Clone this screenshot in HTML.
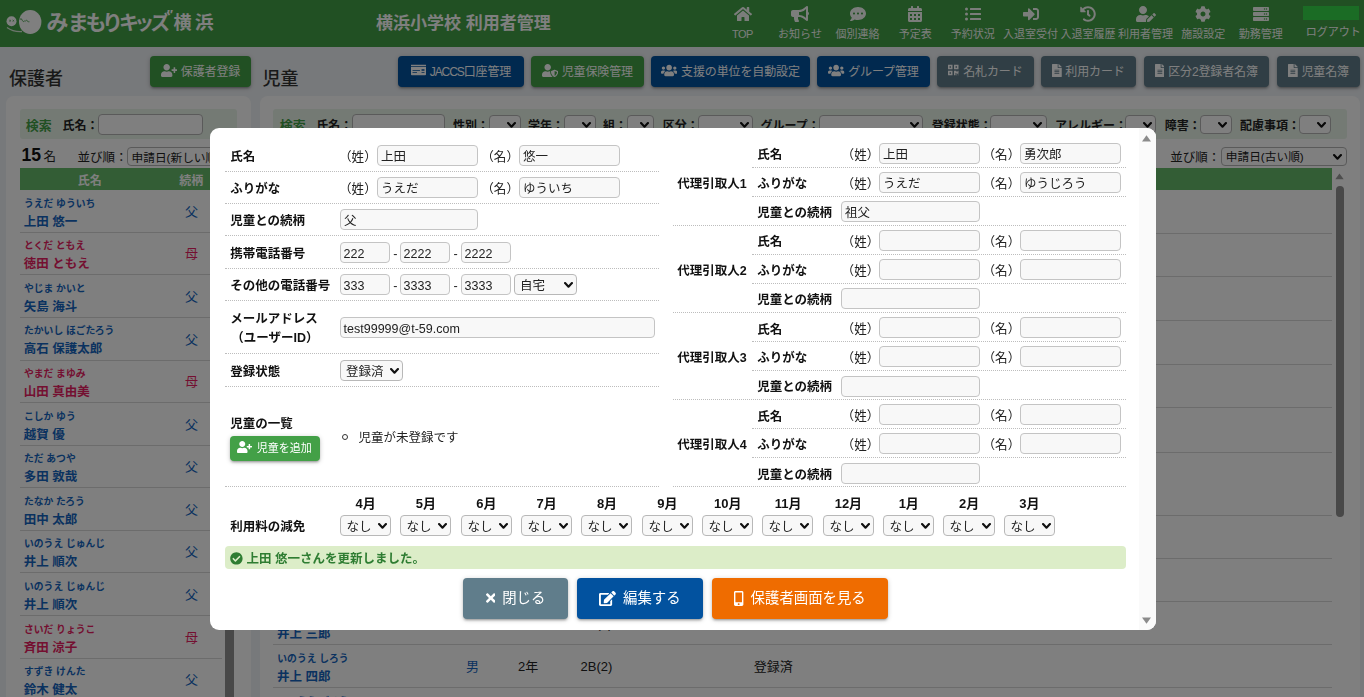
<!DOCTYPE html>
<html lang="ja"><head><meta charset="utf-8"><title>横浜小学校 利用者管理</title><style>
*{margin:0;padding:0;box-sizing:border-box;}
html,body{width:1364px;height:697px;overflow:hidden;background:#eff2f6;}
body{font-family:"Liberation Sans","Noto Sans CJK JP",sans-serif;position:relative;}
#pg{position:absolute;left:0;top:0;width:1364px;height:697px;overflow:hidden;background:#eff2f6;}
.a{position:absolute;}
.t{position:absolute;white-space:nowrap;}
.ic{display:inline-block;flex:none;}
.nv{text-align:center;line-height:0;color:#fff;opacity:.96;}
.btn{padding-bottom:2px;display:flex;align-items:center;justify-content:center;color:#fff;border-radius:4px;white-space:nowrap;box-shadow:0 2px 2px 0 rgba(0,0,0,.14),0 3px 1px -2px rgba(0,0,0,.12),0 1px 5px 0 rgba(0,0,0,.2);}
.btn.big{padding-bottom:0;font-size:14.4px;letter-spacing:0;}
.inp,.inp2,.sel,.sel2{border:1px solid #c4c4c4;border-radius:4px;background:#f8f8f8;font-size:12.500px;color:#222;overflow:hidden;}
.inp2,.sel2{border-color:#b4b4b4;background:#fff;font-size:11.700px;}
.sel{border-color:#b8b8b8;}
.st{position:absolute;top:1.800px;white-space:nowrap;}
.sel .st{top:2.200px;}
.sel2 .st{top:1px;}
.btn.big span{position:relative;top:-1.500px;}
.cv{position:absolute;right:3.500px;top:50%;margin-top:-2.900px;line-height:0;}
.dot{height:0;border-top:1px dotted #bdbdbd;}
</style></head><body><div id="pg">
<header>
<div class="a" style="left:0;top:0;width:1364px;height:47px;background:#43a047;"></div>
<svg class="a" style="left:0;top:0" width="46" height="47" viewBox="0 0 46 47"><circle cx="11.500" cy="21.300" r="5" fill="#fff"/><path d="M7 27.500 Q13 32 22 31.500" stroke="#fff" stroke-width="1.300" fill="none" opacity=".8"/><path d="M9.300 20 l1.600 1.400 m0 -1.400 l-1.600 1.400 M12.600 20 l1.600 1.400 m0 -1.400 l-1.600 1.400" stroke="#43a047" stroke-width="0.700" fill="none"/><ellipse cx="30.200" cy="22" rx="11.200" ry="11.900" fill="#fff"/><path d="M19.800 19.300 q1.800 -1.600 2.600 1.200 q0.800 2.200 2.400 0.300 M25.200 21.200 q1.500 -1.800 2.600 0 q0.600 1.200 1.600 0.600" stroke="#43a047" stroke-width="0.900" fill="none"/></svg>
<span class="t" style="left:-92.5px;width:300px;text-align:center;top:7.60px;font-size:22px;font-weight:700;color:#fff;line-height:30px;">み</span>
<span class="t" style="left:-71.7px;width:300px;text-align:center;top:7.60px;font-size:21px;font-weight:700;color:#fff;line-height:30px;">ま</span>
<span class="t" style="left:-54.099999999999994px;width:300px;text-align:center;top:7.60px;font-size:21px;font-weight:700;color:#fff;line-height:30px;">も</span>
<span class="t" style="left:-37.400000000000006px;width:300px;text-align:center;top:7.60px;font-size:21px;font-weight:700;color:#fff;line-height:30px;">り</span>
<span class="t" style="left:-21.099999999999994px;width:300px;text-align:center;top:7.60px;font-size:20px;font-weight:700;color:#fff;line-height:30px;">キ</span>
<span class="t" style="left:-5.699999999999989px;width:300px;text-align:center;top:7.60px;font-size:20px;font-weight:700;color:#fff;line-height:30px;">ッ</span>
<span class="t" style="left:10.599999999999994px;width:300px;text-align:center;top:7.60px;font-size:20px;font-weight:700;color:#fff;line-height:30px;">ズ</span>
<span class="t" style="left:32.599999999999994px;width:300px;text-align:center;top:7.60px;font-size:18px;font-weight:700;color:#fff;line-height:30px;">横</span>
<span class="t" style="left:54.19999999999999px;width:300px;text-align:center;top:7.60px;font-size:18.5px;font-weight:700;color:#fff;line-height:30px;">浜</span>
<span class="t" style="left:19.80000000000001px;width:300px;text-align:center;top:5.00px;font-size:13px;font-weight:700;color:#fff;line-height:20px;">″</span>
<h1 class="t" style="left:376px;top:11.50px;font-size:17px;font-weight:700;color:#fff;line-height:24px;">横浜小学校 利用者管理</h1>
<nav>
<div class="a nv" style="left:702.5px;top:5.500px;width:80px;"><svg class="ic" viewBox="0 0 576 512" width="18.00" height="16" style="fill:currentColor;"><path d="M280.370 148.260L96 300.110V464a16 16 0 0 0 16 16l112.060-.290a16 16 0 0 0 15.920-16V368a16 16 0 0 1 16-16h64a16 16 0 0 1 16 16v95.640a16 16 0 0 0 16 16.050L464 480a16 16 0 0 0 16-16V300L295.670 148.260a12.190 12.190 0 0 0-15.300 0zM571.600 251.470L488 182.560V44.050a12 12 0 0 0-12-12h-56a12 12 0 0 0-12 12v72.610L318.470 43a48 48 0 0 0-61 0L4.340 251.470a12 12 0 0 0-1.600 16.900l25.500 31A12 12 0 0 0 45.150 301l235.220-193.740a12.190 12.190 0 0 1 15.300 0L530.900 301a12 12 0 0 0 16.900-1.600l25.500-31a12 12 0 0 0-1.700-16.930z"/></svg></div>
<span class="t" style="left:592.4px;width:300px;text-align:center;top:25.70px;font-size:11px;font-weight:400;color:#fff;line-height:16px;letter-spacing:-0.6px;opacity:.96;">TOP</span>
<div class="a nv" style="left:760.1px;top:5.500px;width:80px;"><svg class="ic" viewBox="0 0 576 512" width="18.00" height="16" style="fill:currentColor;"><path d="M576 240c0-23.630-12.950-44.040-32-55.120V32.010C544 23.260 537.020 0 512 0c-7.120 0-14.190 2.380-19.980 7.020l-85.030 68.030C364.280 109.190 310.660 128 256 128H64c-35.350 0-64 28.650-64 64v96c0 35.350 28.650 64 64 64h33.700c-1.390 10.480-2.180 21.140-2.180 32 0 39.770 9.260 77.350 25.560 110.940 5.190 10.690 16.520 17.060 28.400 17.060h74.280c26.050 0 41.690-29.840 25.900-50.560-16.400-21.520-26.150-48.360-26.150-77.440 0-11.110 1.620-21.790 4.410-32H256c54.660 0 108.280 18.810 150.980 52.950l85.030 68.030a32.023 32.023 0 0 0 19.980 7.020c24.920 0 32-22.780 32-32V295.130C563.050 284.040 576 263.630 576 240zm-96 141.420l-33.050-26.440C392.950 311.780 325.120 288 256 288v-96c69.120 0 136.950-23.780 190.950-66.980L480 98.580v282.840z"/></svg></div>
<span class="t" style="left:650.0px;width:300px;text-align:center;top:25.70px;font-size:11px;font-weight:400;color:#fff;line-height:16px;letter-spacing:0;opacity:.96;">お知らせ</span>
<div class="a nv" style="left:817.7px;top:5.500px;width:80px;"><svg class="ic" viewBox="0 0 512 512" width="16.00" height="16" style="fill:currentColor;"><path d="M256 32C114.600 32 0 125.100 0 240c0 49.600 21.400 95 57 130.700C44.500 421.100 2.700 466 2.200 466.500c-2.200 2.300-2.800 5.700-1.500 8.700S4.800 480 8 480c66.300 0 116-31.800 140.600-51.400 32.700 12.300 69 19.400 107.400 19.400 141.400 0 256-93.100 256-208S397.400 32 256 32zM128 272c-17.700 0-32-14.300-32-32s14.300-32 32-32 32 14.300 32 32-14.300 32-32 32zm128 0c-17.700 0-32-14.300-32-32s14.300-32 32-32 32 14.300 32 32-14.300 32-32 32zm128 0c-17.700 0-32-14.300-32-32s14.300-32 32-32 32 14.300 32 32-14.300 32-32 32z"/></svg></div>
<span class="t" style="left:707.6px;width:300px;text-align:center;top:25.70px;font-size:11px;font-weight:400;color:#fff;line-height:16px;letter-spacing:0;opacity:.96;">個別連絡</span>
<div class="a nv" style="left:875.3px;top:5.500px;width:80px;"><svg class="ic" viewBox="0 0 448 512" width="14.00" height="16" style="fill:currentColor;"><path d="M0 464c0 26.500 21.500 48 48 48h352c26.500 0 48-21.500 48-48V192H0v272zm320-196c0-6.600 5.400-12 12-12h40c6.600 0 12 5.400 12 12v40c0 6.600-5.400 12-12 12h-40c-6.600 0-12-5.400-12-12v-40zm0 128c0-6.600 5.400-12 12-12h40c6.600 0 12 5.400 12 12v40c0 6.600-5.400 12-12 12h-40c-6.600 0-12-5.400-12-12v-40zM192 268c0-6.600 5.400-12 12-12h40c6.600 0 12 5.400 12 12v40c0 6.600-5.400 12-12 12h-40c-6.600 0-12-5.400-12-12v-40zm0 128c0-6.600 5.400-12 12-12h40c6.600 0 12 5.400 12 12v40c0 6.600-5.400 12-12 12h-40c-6.600 0-12-5.400-12-12v-40zM64 268c0-6.600 5.400-12 12-12h40c6.600 0 12 5.400 12 12v40c0 6.600-5.400 12-12 12H76c-6.600 0-12-5.400-12-12v-40zm0 128c0-6.600 5.400-12 12-12h40c6.600 0 12 5.400 12 12v40c0 6.600-5.400 12-12 12H76c-6.600 0-12-5.400-12-12v-40zM400 64h-48V16c0-8.800-7.200-16-16-16h-32c-8.800 0-16 7.200-16 16v48H160V16c0-8.800-7.200-16-16-16h-32c-8.800 0-16 7.200-16 16v48H48C21.500 64 0 85.500 0 112v48h448v-48c0-26.500-21.500-48-48-48z"/></svg></div>
<span class="t" style="left:765.1999999999999px;width:300px;text-align:center;top:25.70px;font-size:11px;font-weight:400;color:#fff;line-height:16px;letter-spacing:0;opacity:.96;">予定表</span>
<div class="a nv" style="left:932.9px;top:5.500px;width:80px;"><svg class="ic" viewBox="0 0 512 512" width="16.00" height="16" style="fill:currentColor;"><path d="M48 48a48 48 0 1 0 48 48 48 48 0 0 0-48-48zm0 160a48 48 0 1 0 48 48 48 48 0 0 0-48-48zm0 160a48 48 0 1 0 48 48 48 48 0 0 0-48-48zm448 16H176a16 16 0 0 0-16 16v32a16 16 0 0 0 16 16h320a16 16 0 0 0 16-16v-32a16 16 0 0 0-16-16zm0-320H176a16 16 0 0 0-16 16v32a16 16 0 0 0 16 16h320a16 16 0 0 0 16-16V80a16 16 0 0 0-16-16zm0 160H176a16 16 0 0 0-16 16v32a16 16 0 0 0 16 16h320a16 16 0 0 0 16-16v-32a16 16 0 0 0-16-16z"/></svg></div>
<span class="t" style="left:822.8px;width:300px;text-align:center;top:25.70px;font-size:11px;font-weight:400;color:#fff;line-height:16px;letter-spacing:0;opacity:.96;">予約状況</span>
<div class="a nv" style="left:990.5px;top:5.500px;width:80px;"><svg class="ic" viewBox="0 0 512 512" width="16.00" height="16" style="fill:currentColor;"><path d="M416 448h-84c-6.600 0-12-5.400-12-12v-40c0-6.600 5.400-12 12-12h84c17.700 0 32-14.300 32-32V160c0-17.700-14.300-32-32-32h-84c-6.600 0-12-5.400-12-12V76c0-6.600 5.400-12 12-12h84c53 0 96 43 96 96v192c0 53-43 96-96 96zm-47-201L201 79c-15-15-41-4.500-41 17v96H24c-13.300 0-24 10.700-24 24v96c0 13.300 10.700 24 24 24h136v96c0 21.500 26 32 41 17l168-168c9.300-9.400 9.300-24.600 0-34z"/></svg></div>
<span class="t" style="left:880.4000000000001px;width:300px;text-align:center;top:25.70px;font-size:11px;font-weight:400;color:#fff;line-height:16px;letter-spacing:0;opacity:.96;">入退室受付</span>
<div class="a nv" style="left:1048.1px;top:5.500px;width:80px;"><svg class="ic" viewBox="0 0 512 512" width="16.00" height="16" style="fill:currentColor;"><path d="M504 255.531c.253 136.640-111.180 248.372-247.820 248.468-59.015.042-113.223-20.530-155.822-54.911-11.077-8.940-11.905-25.541-1.839-35.607l11.267-11.267c8.609-8.609 22.353-9.551 31.891-1.984C173.062 425.135 212.781 440 256 440c101.705 0 184-82.311 184-184 0-101.705-82.311-184-184-184-48.814 0-93.149 18.969-126.068 49.932l50.754 50.754c10.080 10.080 2.941 27.314-11.313 27.314H24c-8.837 0-16-7.163-16-16V38.627c0-14.254 17.234-21.393 27.314-11.314l49.372 49.372C129.209 34.136 189.552 8 256 8c136.810 0 247.747 110.780 248 247.531zm-180.912 78.784l9.823-12.630c8.138-10.463 6.253-25.542-4.210-33.679L288 256.349V152c0-13.255-10.745-24-24-24h-16c-13.255 0-24 10.745-24 24v135.651l65.409 50.874c10.463 8.137 25.541 6.253 33.679-4.210z"/></svg></div>
<span class="t" style="left:938.0px;width:300px;text-align:center;top:25.70px;font-size:11px;font-weight:400;color:#fff;line-height:16px;letter-spacing:0;opacity:.96;">入退室履歴</span>
<div class="a nv" style="left:1105.7px;top:5.500px;width:80px;"><svg class="ic" viewBox="0 0 640 512" width="20.00" height="16" style="fill:currentColor;"><path d="M224 256c70.700 0 128-57.300 128-128S294.700 0 224 0 96 57.300 96 128s57.300 128 128 128zm89.600 32h-16.700c-22.200 10.200-46.900 16-72.900 16s-50.600-5.800-72.900-16h-16.700C60.200 288 0 348.200 0 422.400V464c0 26.500 21.500 48 48 48h274.900c-2.400-6.800-3.400-14-2.600-21.300l6.800-60.900 1.200-11.100 7.900-7.900 77.300-77.300c-24.500-27.700-60-45.500-99.900-45.500zm45.300 145.300l-6.800 61c-1.100 10.200 7.500 18.800 17.600 17.600l60.900-6.800 137.900-137.900-71.700-71.700-137.900 137.800zM633 268.900L595.100 231c-9.300-9.300-24.500-9.300-33.800 0l-37.800 37.800-4.100 4.100 71.800 71.700 41.800-41.800c9.300-9.400 9.300-24.500 0-33.900z"/></svg></div>
<span class="t" style="left:995.6000000000001px;width:300px;text-align:center;top:25.70px;font-size:11px;font-weight:400;color:#fff;line-height:16px;letter-spacing:0;opacity:.96;">利用者管理</span>
<div class="a nv" style="left:1163.3px;top:5.500px;width:80px;"><svg class="ic" viewBox="0 0 512 512" width="16.00" height="16" style="fill:currentColor;"><path d="M487.400 315.700l-42.600-24.600c4.300-23.200 4.300-47 0-70.200l42.600-24.600c4.900-2.800 7.100-8.600 5.500-14-11.100-35.600-30-67.800-54.700-94.600-3.800-4.100-10-5.100-14.800-2.300L380.800 110c-17.900-15.400-38.500-27.300-60.800-35.100V25.800c0-5.600-3.900-10.500-9.400-11.700-36.700-8.200-74.300-7.800-109.200 0-5.500 1.200-9.400 6.100-9.400 11.700V75c-22.200 7.900-42.800 19.800-60.800 35.100L88.700 85.500c-4.900-2.800-11-1.900-14.800 2.300-24.700 26.700-43.600 58.900-54.700 94.600-1.700 5.400.6 11.200 5.500 14L67.300 221c-4.300 23.200-4.300 47 0 70.200l-42.600 24.600c-4.900 2.800-7.100 8.600-5.500 14 11.100 35.600 30 67.800 54.700 94.600 3.800 4.100 10 5.100 14.800 2.300l42.600-24.600c17.900 15.400 38.500 27.300 60.800 35.100v49.200c0 5.600 3.900 10.500 9.400 11.700 36.700 8.200 74.300 7.800 109.200 0 5.500-1.200 9.400-6.100 9.400-11.700v-49.200c22.200-7.900 42.800-19.800 60.800-35.100l42.600 24.600c4.900 2.800 11 1.900 14.800-2.300 24.700-26.700 43.600-58.900 54.700-94.600 1.500-5.500-.7-11.300-5.600-14.100zM256 336c-44.100 0-80-35.900-80-80s35.900-80 80-80 80 35.900 80 80-35.900 80-80 80z"/></svg></div>
<span class="t" style="left:1053.2px;width:300px;text-align:center;top:25.70px;font-size:11px;font-weight:400;color:#fff;line-height:16px;letter-spacing:0;opacity:.96;">施設設定</span>
<div class="a nv" style="left:1220.9px;top:5.500px;width:80px;"><svg class="ic" viewBox="0 0 512 512" width="16.00" height="16" style="fill:currentColor;"><path d="M480 160H32c-17.673 0-32-14.327-32-32V64c0-17.673 14.327-32 32-32h448c17.673 0 32 14.327 32 32v64c0 17.673-14.327 32-32 32zm-48-88c-13.255 0-24 10.745-24 24s10.745 24 24 24 24-10.745 24-24-10.745-24-24-24zm-64 0c-13.255 0-24 10.745-24 24s10.745 24 24 24 24-10.745 24-24-10.745-24-24-24zm112 248H32c-17.673 0-32-14.327-32-32v-64c0-17.673 14.327-32 32-32h448c17.673 0 32 14.327 32 32v64c0 17.673-14.327 32-32 32zm-48-88c-13.255 0-24 10.745-24 24s10.745 24 24 24 24-10.745 24-24-10.745-24-24-24zm-64 0c-13.255 0-24 10.745-24 24s10.745 24 24 24 24-10.745 24-24-10.745-24-24-24zm112 248H32c-17.673 0-32-14.327-32-32v-64c0-17.673 14.327-32 32-32h448c17.673 0 32 14.327 32 32v64c0 17.673-14.327 32-32 32zm-48-88c-13.255 0-24 10.745-24 24s10.745 24 24 24 24-10.745 24-24-10.745-24-24-24zm-64 0c-13.255 0-24 10.745-24 24s10.745 24 24 24 24-10.745 24-24-10.745-24-24-24z"/></svg></div>
<span class="t" style="left:1110.8000000000002px;width:300px;text-align:center;top:25.70px;font-size:11px;font-weight:400;color:#fff;line-height:16px;letter-spacing:0;opacity:.96;">勤務管理</span>
<span class="t" style="left:1183.2px;width:300px;text-align:center;top:23.60px;font-size:11px;font-weight:400;color:#fff;line-height:16px;">ログアウト</span>
</nav></header>
<main><section>
<h2 class="t" style="left:8.9px;top:67.40px;font-size:18px;font-weight:500;color:#333;line-height:24px;">保護者</h2>
<div class="a btn" style="left:150px;top:56px;width:101px;height:31px;background:#43a047;font-size:12px;letter-spacing:-0.12px;padding-bottom:3px;padding-right:0px;"><svg class="ic" viewBox="0 0 640 512" width="16.25" height="13" style="fill:currentColor;margin-right:3.7px;"><path d="M624 208h-64v-64c0-8.800-7.200-16-16-16h-32c-8.800 0-16 7.200-16 16v64h-64c-8.800 0-16 7.200-16 16v32c0 8.800 7.200 16 16 16h64v64c0 8.800 7.200 16 16 16h32c8.800 0 16-7.200 16-16v-64h64c8.800 0 16-7.200 16-16v-32c0-8.800-7.200-16-16-16zm-400 48c70.700 0 128-57.300 128-128S294.700 0 224 0 96 57.300 96 128s57.300 128 128 128zm89.600 32h-16.700c-22.200 10.200-46.900 16-72.900 16s-50.600-5.800-72.900-16h-16.700C60.200 288 0 348.200 0 422.400V464c0 26.500 21.500 48 48 48h352c26.500 0 48-21.500 48-48v-41.600c0-74.200-60.200-134.400-134.400-134.400z"/></svg><span>保護者登録</span></div>
<div class="a" style="left:6px;top:96px;width:245px;height:620px;background:#fff;border-radius:8px;"></div>
<div class="a" style="left:20px;top:109px;width:216.5px;height:30px;background:#e8f5e9;border-radius:3px;"></div>
<span class="t" style="left:25.8px;top:115.80px;font-size:13px;font-weight:700;color:#43a047;line-height:20px;">検索</span>
<span class="t" style="left:62.6px;top:116.20px;font-size:12px;font-weight:700;color:#222;line-height:20px;">氏名：</span>
<div class="a inp2" style="left:98px;top:114px;width:105px;height:21px;"><span class="st" style="left:2.9px;line-height:19px;"></span></div>
<span class="t" style="left:21.5px;top:144.20px;font-size:17.6px;font-weight:700;color:#111;line-height:22px;">15</span>
<span class="t" style="left:43.5px;top:146.60px;font-size:12.5px;font-weight:400;color:#222;line-height:20px;">名</span>
<span class="t" style="left:77.5px;top:148.20px;font-size:12.5px;font-weight:400;color:#222;line-height:20px;">並び順：</span>
<div class="a sel2" style="left:127px;top:147px;width:110px;height:19.2px;"><span class="st" style="left:3.5px;line-height:17.2px;">申請日(新しい順)</span><span class="cv"><svg class="chev" viewBox="0 0 10 7" width="9" height="6.3"><path d="M1.2 1.2 L5 5.2 L8.800 1.200" fill="none" stroke="#111" stroke-width="2.4" stroke-linecap="round" stroke-linejoin="round"/></svg></span></div>
<div class="a" style="left:20px;top:168px;width:216.5px;height:21.7px;background:#66bb6a;"></div>
<span class="t" style="left:-60.2px;width:300px;text-align:center;top:171.50px;font-size:12px;font-weight:700;color:#fff;line-height:18px;">氏名</span>
<span class="t" style="left:41.30000000000001px;width:300px;text-align:center;top:171.50px;font-size:12px;font-weight:700;color:#fff;line-height:18px;">続柄</span>
<span class="t" style="left:24.0px;top:196.70px;font-size:9.8px;font-weight:700;color:#1565c0;line-height:14px;">うえだ ゆういち</span>
<span class="t" style="left:23.8px;top:212.70px;font-size:12.5px;font-weight:700;color:#1565c0;line-height:18px;">上田 悠一</span>
<span class="t" style="left:41.5px;width:300px;text-align:center;top:202.80px;font-size:13px;font-weight:400;color:#1565c0;line-height:18px;">父</span>
<div class="a" style="left:20px;top:232px;width:201.7px;height:1px;background:#d8d8d8;"></div>
<span class="t" style="left:24.0px;top:239.28px;font-size:9.8px;font-weight:700;color:#e91e63;line-height:14px;">とくだ ともえ</span>
<span class="t" style="left:23.8px;top:255.28px;font-size:12.5px;font-weight:700;color:#e91e63;line-height:18px;">徳田 ともえ</span>
<span class="t" style="left:41.5px;width:300px;text-align:center;top:245.38px;font-size:13px;font-weight:400;color:#e91e63;line-height:18px;">母</span>
<div class="a" style="left:20px;top:274px;width:201.7px;height:1px;background:#d8d8d8;"></div>
<span class="t" style="left:24.0px;top:281.86px;font-size:9.8px;font-weight:700;color:#1565c0;line-height:14px;">やじま かいと</span>
<span class="t" style="left:23.8px;top:297.86px;font-size:12.5px;font-weight:700;color:#1565c0;line-height:18px;">矢島 海斗</span>
<span class="t" style="left:41.5px;width:300px;text-align:center;top:287.96px;font-size:13px;font-weight:400;color:#1565c0;line-height:18px;">父</span>
<div class="a" style="left:20px;top:317px;width:201.7px;height:1px;background:#d8d8d8;"></div>
<span class="t" style="left:24.0px;top:324.44px;font-size:9.8px;font-weight:700;color:#1565c0;line-height:14px;">たかいし ほごたろう</span>
<span class="t" style="left:23.8px;top:340.44px;font-size:12.5px;font-weight:700;color:#1565c0;line-height:18px;">高石 保護太郎</span>
<span class="t" style="left:41.5px;width:300px;text-align:center;top:330.54px;font-size:13px;font-weight:400;color:#1565c0;line-height:18px;">父</span>
<div class="a" style="left:20px;top:360px;width:201.7px;height:1px;background:#d8d8d8;"></div>
<span class="t" style="left:24.0px;top:367.02px;font-size:9.8px;font-weight:700;color:#e91e63;line-height:14px;">やまだ まゆみ</span>
<span class="t" style="left:23.8px;top:383.02px;font-size:12.5px;font-weight:700;color:#e91e63;line-height:18px;">山田 真由美</span>
<span class="t" style="left:41.5px;width:300px;text-align:center;top:373.12px;font-size:13px;font-weight:400;color:#e91e63;line-height:18px;">母</span>
<div class="a" style="left:20px;top:402px;width:201.7px;height:1px;background:#d8d8d8;"></div>
<span class="t" style="left:24.0px;top:409.60px;font-size:9.8px;font-weight:700;color:#1565c0;line-height:14px;">こしか ゆう</span>
<span class="t" style="left:23.8px;top:425.60px;font-size:12.5px;font-weight:700;color:#1565c0;line-height:18px;">越賀 優</span>
<span class="t" style="left:41.5px;width:300px;text-align:center;top:415.70px;font-size:13px;font-weight:400;color:#1565c0;line-height:18px;">父</span>
<div class="a" style="left:20px;top:445px;width:201.7px;height:1px;background:#d8d8d8;"></div>
<span class="t" style="left:24.0px;top:452.18px;font-size:9.8px;font-weight:700;color:#1565c0;line-height:14px;">ただ あつや</span>
<span class="t" style="left:23.8px;top:468.18px;font-size:12.5px;font-weight:700;color:#1565c0;line-height:18px;">多田 敦哉</span>
<span class="t" style="left:41.5px;width:300px;text-align:center;top:458.28px;font-size:13px;font-weight:400;color:#1565c0;line-height:18px;">父</span>
<div class="a" style="left:20px;top:487px;width:201.7px;height:1px;background:#d8d8d8;"></div>
<span class="t" style="left:24.0px;top:494.76px;font-size:9.8px;font-weight:700;color:#1565c0;line-height:14px;">たなか たろう</span>
<span class="t" style="left:23.8px;top:510.76px;font-size:12.5px;font-weight:700;color:#1565c0;line-height:18px;">田中 太郎</span>
<span class="t" style="left:41.5px;width:300px;text-align:center;top:500.86px;font-size:13px;font-weight:400;color:#1565c0;line-height:18px;">父</span>
<div class="a" style="left:20px;top:530px;width:201.7px;height:1px;background:#d8d8d8;"></div>
<span class="t" style="left:24.0px;top:537.34px;font-size:9.8px;font-weight:700;color:#1565c0;line-height:14px;">いのうえ じゅんじ</span>
<span class="t" style="left:23.8px;top:553.34px;font-size:12.5px;font-weight:700;color:#1565c0;line-height:18px;">井上 順次</span>
<span class="t" style="left:41.5px;width:300px;text-align:center;top:543.44px;font-size:13px;font-weight:400;color:#1565c0;line-height:18px;">父</span>
<div class="a" style="left:20px;top:572px;width:201.7px;height:1px;background:#d8d8d8;"></div>
<span class="t" style="left:24.0px;top:579.92px;font-size:9.8px;font-weight:700;color:#1565c0;line-height:14px;">いのうえ じゅんじ</span>
<span class="t" style="left:23.8px;top:595.92px;font-size:12.5px;font-weight:700;color:#1565c0;line-height:18px;">井上 順次</span>
<span class="t" style="left:41.5px;width:300px;text-align:center;top:586.02px;font-size:13px;font-weight:400;color:#1565c0;line-height:18px;">父</span>
<div class="a" style="left:20px;top:615px;width:201.7px;height:1px;background:#d8d8d8;"></div>
<span class="t" style="left:24.0px;top:622.50px;font-size:9.8px;font-weight:700;color:#e91e63;line-height:14px;">さいだ りょうこ</span>
<span class="t" style="left:23.8px;top:638.50px;font-size:12.5px;font-weight:700;color:#e91e63;line-height:18px;">斉田 涼子</span>
<span class="t" style="left:41.5px;width:300px;text-align:center;top:628.60px;font-size:13px;font-weight:400;color:#e91e63;line-height:18px;">母</span>
<div class="a" style="left:20px;top:658px;width:201.7px;height:1px;background:#d8d8d8;"></div>
<span class="t" style="left:24.0px;top:665.08px;font-size:9.8px;font-weight:700;color:#1565c0;line-height:14px;">すずき けんた</span>
<span class="t" style="left:23.8px;top:681.08px;font-size:12.5px;font-weight:700;color:#1565c0;line-height:18px;">鈴木 健太</span>
<span class="t" style="left:41.5px;width:300px;text-align:center;top:671.18px;font-size:13px;font-weight:400;color:#1565c0;line-height:18px;">父</span>
<div class="a" style="left:20px;top:700px;width:201.7px;height:1px;background:#d8d8d8;"></div>
<div class="a" style="left:225.2px;top:189px;width:8.5px;height:520px;background:#909090;"></div>
</section>
<section>
<h2 class="t" style="left:262.6px;top:67.40px;font-size:18px;font-weight:500;color:#333;line-height:24px;">児童</h2>
<div class="a btn" style="left:398px;top:56px;width:126px;height:31px;background:#02529f;font-size:12px;letter-spacing:-0.12px;padding-bottom:3px;padding-right:0px;"><svg class="ic" viewBox="0 0 640 512" width="15.00" height="12" style="fill:currentColor;margin-right:4px;"><path d="M0 448c0 17.670 14.330 32 32 32h576c17.670 0 32-14.330 32-32V128H0v320zm448-208c0-8.840 7.160-16 16-16h96c8.840 0 16 7.160 16 16v32c0 8.840-7.160 16-16 16h-96c-8.840 0-16-7.160-16-16v-32zm0 120c0-4.420 3.580-8 8-8h112c4.420 0 8 3.580 8 8v16c0 4.420-3.580 8-8 8H456c-4.420 0-8-3.580-8-8v-16zM64 264c0-4.420 3.580-8 8-8h304c4.420 0 8 3.580 8 8v16c0 4.420-3.580 8-8 8H72c-4.420 0-8-3.580-8-8v-16zm0 96c0-4.420 3.580-8 8-8h176c4.420 0 8 3.580 8 8v16c0 4.420-3.580 8-8 8H72c-4.420 0-8-3.580-8-8v-16zM624 32H16C7.160 32 0 39.160 0 48v48h640V48c0-8.840-7.160-16-16-16z"/></svg><span><span style="letter-spacing:-1.1px">JACCS</span>口座管理</span></div>
<div class="a btn" style="left:531px;top:56px;width:112.7px;height:31px;background:#43a047;font-size:12px;letter-spacing:-0.12px;padding-bottom:3px;padding-right:0px;"><svg class="ic" viewBox="0 0 640 512" width="16.25" height="13" style="fill:currentColor;margin-right:3.7px;"><path d="M622.300 271.100l-115.200-45c-4.100-1.600-12.600-3.700-22.200 0l-115.200 45c-10.700 4.200-17.700 14-17.700 24.900 0 111.600 68.700 188.800 132.900 213.900 9.600 3.700 18 1.600 22.200 0C558.400 489.900 640 420.500 640 296c0-10.900-7-20.700-17.700-24.900zM496 462.400V273.300l95.500 37.300c-5.600 87.100-60.900 135.400-95.500 151.800zM224 256c70.700 0 128-57.300 128-128S294.700 0 224 0 96 57.300 96 128s57.300 128 128 128zm96 40c0-2.500.800-4.800 1.100-7.200-2.500-.100-4.900-.800-7.500-.800h-16.700c-22.200 10.200-46.900 16-72.900 16s-50.600-5.800-72.900-16h-16.700C60.200 288 0 348.200 0 422.400V464c0 26.500 21.500 48 48 48h352c6.800 0 13.300-1.500 19.200-4-54-42.900-99.200-116.700-99.200-212z"/></svg><span>児童保険管理</span></div>
<div class="a btn" style="left:651px;top:56px;width:159px;height:31px;background:#02529f;font-size:12px;letter-spacing:-0.12px;padding-bottom:3px;padding-right:0px;"><svg class="ic" viewBox="0 0 640 512" width="16.25" height="13" style="fill:currentColor;margin-right:3.7px;"><path d="M96 224c35.300 0 64-28.700 64-64s-28.700-64-64-64-64 28.700-64 64 28.700 64 64 64zm448 0c35.300 0 64-28.700 64-64s-28.700-64-64-64-64 28.700-64 64 28.700 64 64 64zm32 32h-64c-17.600 0-33.500 7.100-45.100 18.600 40.300 22.100 68.900 62 75.100 109.400h66c17.700 0 32-14.300 32-32v-32c0-35.300-28.700-64-64-64zm-256 0c61.900 0 112-50.100 112-112S381.900 32 320 32 208 82.100 208 144s50.100 112 112 112zm76.800 32h-8.300c-20.800 10-43.900 16-68.500 16s-47.600-6-68.500-16h-8.300C179.600 288 128 339.600 128 403.200V432c0 26.500 21.500 48 48 48h288c26.500 0 48-21.500 48-48v-28.800c0-63.600-51.600-115.200-115.200-115.200zm-223.700-13.400C161.500 263.100 145.600 256 128 256H64c-35.300 0-64 28.700-64 64v32c0 17.700 14.300 32 32 32h65.900c6.300-47.400 34.900-87.300 75.200-109.400z"/></svg><span>支援の単位を自動設定</span></div>
<div class="a btn" style="left:817px;top:56px;width:113px;height:31px;background:#02529f;font-size:12px;letter-spacing:-0.12px;padding-bottom:3px;padding-right:0px;"><svg class="ic" viewBox="0 0 640 512" width="16.25" height="13" style="fill:currentColor;margin-right:3.7px;"><path d="M96 224c35.300 0 64-28.700 64-64s-28.700-64-64-64-64 28.700-64 64 28.700 64 64 64zm448 0c35.300 0 64-28.700 64-64s-28.700-64-64-64-64 28.700-64 64 28.700 64 64 64zm32 32h-64c-17.600 0-33.500 7.100-45.100 18.600 40.300 22.100 68.900 62 75.100 109.400h66c17.700 0 32-14.300 32-32v-32c0-35.300-28.700-64-64-64zm-256 0c61.900 0 112-50.100 112-112S381.900 32 320 32 208 82.100 208 144s50.100 112 112 112zm76.800 32h-8.300c-20.800 10-43.900 16-68.500 16s-47.600-6-68.500-16h-8.300C179.600 288 128 339.600 128 403.200V432c0 26.500 21.500 48 48 48h288c26.500 0 48-21.500 48-48v-28.800c0-63.600-51.600-115.200-115.200-115.200zm-223.700-13.400C161.500 263.100 145.600 256 128 256H64c-35.300 0-64 28.700-64 64v32c0 17.700 14.300 32 32 32h65.900c6.300-47.400 34.900-87.300 75.200-109.400z"/></svg><span>グループ管理</span></div>
<div class="a btn" style="left:937px;top:56px;width:96.8px;height:31px;background:#607d8b;font-size:12px;letter-spacing:-0.12px;padding-bottom:3px;padding-right:0px;"><svg class="ic" viewBox="0 0 448 512" width="10.50" height="12" style="fill:currentColor;margin-right:4.5px;"><path d="M0 224h192V32H0v192zM64 96h64v64H64V96zm192-64v192h192V32H256zm128 128h-64V96h64v64zM0 480h192V288H0v192zm64-128h64v64H64v-64zm352-64h32v128h-96v-32h-32v96h-64V288h96v32h64v-32zm0 160h32v32h-32v-32zm-64 0h32v32h-32v-32z"/></svg><span>名札カード</span></div>
<div class="a btn" style="left:1040.9px;top:56px;width:94.9px;height:31px;background:#607d8b;font-size:12px;letter-spacing:-0.12px;padding-bottom:3px;padding-right:0px;"><svg class="ic" viewBox="0 0 384 512" width="9.75" height="13" style="fill:currentColor;margin-right:3.7px;"><path d="M224 136V0H24C10.700 0 0 10.700 0 24v464c0 13.300 10.700 24 24 24h336c13.300 0 24-10.700 24-24V160H248c-13.200 0-24-10.800-24-24zm64 236c0 6.600-5.400 12-12 12H108c-6.600 0-12-5.400-12-12v-8c0-6.600 5.400-12 12-12h168c6.600 0 12 5.400 12 12v8zm0-64c0 6.600-5.400 12-12 12H108c-6.600 0-12-5.400-12-12v-8c0-6.600 5.400-12 12-12h168c6.600 0 12 5.400 12 12v8zm0-72v8c0 6.600-5.400 12-12 12H108c-6.600 0-12-5.400-12-12v-8c0-6.600 5.400-12 12-12h168c6.600 0 12 5.400 12 12zm96-114.100v6.100H256V0h6.100c6.400 0 12.500 2.500 17 7l97.900 98c4.500 4.500 7 10.600 7 16.900z"/></svg><span>利用カード</span></div>
<div class="a btn" style="left:1143.9px;top:56px;width:124.8px;height:31px;background:#607d8b;font-size:12px;letter-spacing:-0.12px;padding-bottom:3px;padding-right:0px;"><svg class="ic" viewBox="0 0 384 512" width="9.75" height="13" style="fill:currentColor;margin-right:3.7px;"><path d="M224 136V0H24C10.700 0 0 10.700 0 24v464c0 13.300 10.700 24 24 24h336c13.300 0 24-10.700 24-24V160H248c-13.200 0-24-10.800-24-24zm64 236c0 6.600-5.400 12-12 12H108c-6.600 0-12-5.400-12-12v-8c0-6.600 5.400-12 12-12h168c6.600 0 12 5.400 12 12v8zm0-64c0 6.600-5.400 12-12 12H108c-6.600 0-12-5.400-12-12v-8c0-6.600 5.400-12 12-12h168c6.600 0 12 5.400 12 12v8zm0-72v8c0 6.600-5.400 12-12 12H108c-6.600 0-12-5.400-12-12v-8c0-6.600 5.400-12 12-12h168c6.600 0 12 5.400 12 12zm96-114.100v6.100H256V0h6.100c6.400 0 12.500 2.500 17 7l97.900 98c4.500 4.500 7 10.600 7 16.900z"/></svg><span>区分2登録者名簿</span></div>
<div class="a btn" style="left:1276.8px;top:56px;width:83.4px;height:31px;background:#607d8b;font-size:12px;letter-spacing:-0.12px;padding-bottom:3px;padding-right:0px;"><svg class="ic" viewBox="0 0 384 512" width="9.75" height="13" style="fill:currentColor;margin-right:3.7px;"><path d="M224 136V0H24C10.700 0 0 10.700 0 24v464c0 13.300 10.700 24 24 24h336c13.300 0 24-10.700 24-24V160H248c-13.200 0-24-10.800-24-24zm64 236c0 6.600-5.400 12-12 12H108c-6.600 0-12-5.400-12-12v-8c0-6.600 5.400-12 12-12h168c6.600 0 12 5.400 12 12v8zm0-64c0 6.600-5.400 12-12 12H108c-6.600 0-12-5.400-12-12v-8c0-6.600 5.400-12 12-12h168c6.600 0 12 5.400 12 12v8zm0-72v8c0 6.600-5.400 12-12 12H108c-6.600 0-12-5.400-12-12v-8c0-6.600 5.400-12 12-12h168c6.600 0 12 5.400 12 12zm96-114.100v6.100H256V0h6.100c6.400 0 12.500 2.500 17 7l97.900 98c4.500 4.500 7 10.600 7 16.900z"/></svg><span>児童名簿</span></div>
<div class="a" style="left:260px;top:96px;width:1099.5px;height:620px;background:#fff;border-radius:8px;"></div>
<div class="a" style="left:272.8px;top:109px;width:1074.3px;height:30px;background:#e8f5e9;border-radius:3px;"></div>
<span class="t" style="left:279.8px;top:115.80px;font-size:13px;font-weight:700;color:#43a047;line-height:20px;">検索</span>
<span class="t" style="left:316.2px;top:116.20px;font-size:12px;font-weight:700;color:#222;line-height:20px;">氏名：</span>
<div class="a inp2" style="left:352px;top:114px;width:93px;height:21px;"><span class="st" style="left:2.9px;line-height:19px;"></span></div>
<span class="t" style="left:452.90000000000003px;top:116.20px;font-size:12px;font-weight:700;color:#222;line-height:20px;">性別：</span>
<div class="a sel2" style="left:488.5px;top:115px;width:32.199999999999996px;height:19px;"><span class="st" style="left:5px;line-height:17px;"></span><span class="cv"><svg class="chev" viewBox="0 0 10 7" width="9" height="6.3"><path d="M1.2 1.2 L5 5.2 L8.800 1.200" fill="none" stroke="#111" stroke-width="2.4" stroke-linecap="round" stroke-linejoin="round"/></svg></span></div>
<span class="t" style="left:528.0999999999999px;top:116.20px;font-size:12px;font-weight:700;color:#222;line-height:20px;">学年：</span>
<div class="a sel2" style="left:563.7px;top:115px;width:31.900000000000002px;height:19px;"><span class="st" style="left:5px;line-height:17px;"></span><span class="cv"><svg class="chev" viewBox="0 0 10 7" width="9" height="6.3"><path d="M1.2 1.2 L5 5.2 L8.800 1.200" fill="none" stroke="#111" stroke-width="2.4" stroke-linecap="round" stroke-linejoin="round"/></svg></span></div>
<span class="t" style="left:603.0px;top:116.20px;font-size:12px;font-weight:700;color:#222;line-height:20px;">組：</span>
<div class="a sel2" style="left:626.8000000000001px;top:115px;width:26.8px;height:19px;"><span class="st" style="left:5px;line-height:17px;"></span><span class="cv"><svg class="chev" viewBox="0 0 10 7" width="9" height="6.3"><path d="M1.2 1.2 L5 5.2 L8.800 1.200" fill="none" stroke="#111" stroke-width="2.4" stroke-linecap="round" stroke-linejoin="round"/></svg></span></div>
<span class="t" style="left:662.6999999999999px;top:116.20px;font-size:12px;font-weight:700;color:#222;line-height:20px;">区分：</span>
<div class="a sel2" style="left:697.6px;top:115px;width:55.5px;height:19px;"><span class="st" style="left:5px;line-height:17px;"></span><span class="cv"><svg class="chev" viewBox="0 0 10 7" width="9" height="6.3"><path d="M1.2 1.2 L5 5.2 L8.800 1.200" fill="none" stroke="#111" stroke-width="2.4" stroke-linecap="round" stroke-linejoin="round"/></svg></span></div>
<span class="t" style="left:760.5px;top:116.20px;font-size:12px;font-weight:700;color:#222;line-height:20px;">グループ：</span>
<div class="a sel2" style="left:819.0px;top:115px;width:104.39999999999999px;height:19px;"><span class="st" style="left:5px;line-height:17px;"></span><span class="cv"><svg class="chev" viewBox="0 0 10 7" width="9" height="6.3"><path d="M1.2 1.2 L5 5.2 L8.800 1.200" fill="none" stroke="#111" stroke-width="2.4" stroke-linecap="round" stroke-linejoin="round"/></svg></span></div>
<span class="t" style="left:931.8px;top:116.20px;font-size:12px;font-weight:700;color:#222;line-height:20px;">登録状態：</span>
<div class="a sel2" style="left:990.4000000000001px;top:115px;width:56.4px;height:19px;"><span class="st" style="left:5px;line-height:17px;"></span><span class="cv"><svg class="chev" viewBox="0 0 10 7" width="9" height="6.3"><path d="M1.2 1.2 L5 5.2 L8.800 1.200" fill="none" stroke="#111" stroke-width="2.4" stroke-linecap="round" stroke-linejoin="round"/></svg></span></div>
<span class="t" style="left:1054.8999999999999px;top:116.20px;font-size:12px;font-weight:700;color:#222;line-height:20px;">アレルギー：</span>
<div class="a sel2" style="left:1124.9px;top:115px;width:31.5px;height:19px;"><span class="st" style="left:5px;line-height:17px;"></span><span class="cv"><svg class="chev" viewBox="0 0 10 7" width="9" height="6.3"><path d="M1.2 1.2 L5 5.2 L8.800 1.200" fill="none" stroke="#111" stroke-width="2.4" stroke-linecap="round" stroke-linejoin="round"/></svg></span></div>
<span class="t" style="left:1164.8px;top:116.20px;font-size:12px;font-weight:700;color:#222;line-height:20px;">障害：</span>
<div class="a sel2" style="left:1200.0px;top:115px;width:31.6px;height:19px;"><span class="st" style="left:5px;line-height:17px;"></span><span class="cv"><svg class="chev" viewBox="0 0 10 7" width="9" height="6.3"><path d="M1.2 1.2 L5 5.2 L8.800 1.200" fill="none" stroke="#111" stroke-width="2.4" stroke-linecap="round" stroke-linejoin="round"/></svg></span></div>
<span class="t" style="left:1240.0px;top:116.20px;font-size:12px;font-weight:700;color:#222;line-height:20px;">配慮事項：</span>
<div class="a sel2" style="left:1298.5px;top:115px;width:32.1px;height:19px;"><span class="st" style="left:5px;line-height:17px;"></span><span class="cv"><svg class="chev" viewBox="0 0 10 7" width="9" height="6.3"><path d="M1.2 1.2 L5 5.2 L8.800 1.200" fill="none" stroke="#111" stroke-width="2.4" stroke-linecap="round" stroke-linejoin="round"/></svg></span></div>
<span class="t" style="left:1170.2px;top:148.20px;font-size:12.5px;font-weight:400;color:#222;line-height:20px;">並び順：</span>
<div class="a sel2" style="left:1221.3px;top:147.2px;width:125.3px;height:18.6px;"><span class="st" style="left:3.5px;line-height:16.6px;">申請日(古い順)</span><span class="cv"><svg class="chev" viewBox="0 0 10 7" width="9" height="6.3"><path d="M1.2 1.2 L5 5.2 L8.800 1.200" fill="none" stroke="#111" stroke-width="2.4" stroke-linecap="round" stroke-linejoin="round"/></svg></span></div>
<div class="a" style="left:272.8px;top:168.2px;width:1059.2px;height:21.5px;background:#66bb6a;"></div>
<div class="a" style="left:272.8px;top:232.8px;width:1059.2px;height:1px;background:#d8d8d8;"></div>
<div class="a" style="left:272.8px;top:275.7px;width:1059.2px;height:1px;background:#d8d8d8;"></div>
<div class="a" style="left:272.8px;top:319.7px;width:1059.2px;height:1px;background:#d8d8d8;"></div>
<div class="a" style="left:272.8px;top:364.4px;width:1059.2px;height:1px;background:#d8d8d8;"></div>
<div class="a" style="left:272.8px;top:406.6px;width:1059.2px;height:1px;background:#d8d8d8;"></div>
<div class="a" style="left:272.8px;top:451.9px;width:1059.2px;height:1px;background:#d8d8d8;"></div>
<div class="a" style="left:272.8px;top:515.3px;width:1059.2px;height:1px;background:#d8d8d8;"></div>
<div class="a" style="left:272.8px;top:558.4px;width:1059.2px;height:1px;background:#d8d8d8;"></div>
<div class="a" style="left:272.8px;top:600.8px;width:1059.2px;height:1px;background:#d8d8d8;"></div>
<div class="a" style="left:272.8px;top:643.7px;width:1059.2px;height:1px;background:#d8d8d8;"></div>
<div class="a" style="left:272.8px;top:686.6px;width:1059.2px;height:1px;background:#d8d8d8;"></div>
<span class="t" style="left:277.3px;top:609.20px;font-size:9.8px;font-weight:700;color:#1565c0;line-height:14px;">いのうえ さぶろう</span>
<span class="t" style="left:277.1px;top:625.40px;font-size:12.5px;font-weight:700;color:#1565c0;line-height:18px;">井上 三郎</span>
<span class="t" style="left:466px;top:615.10px;font-size:13px;font-weight:400;color:#1565c0;line-height:18px;">男</span>
<span class="t" style="left:518px;top:615.10px;font-size:13px;font-weight:400;color:#222;line-height:18px;">1年</span>
<span class="t" style="left:580.6px;top:615.10px;font-size:13px;font-weight:400;color:#222;line-height:18px;">1A(2)</span>
<span class="t" style="left:753.7px;top:615.10px;font-size:13px;font-weight:400;color:#222;line-height:18px;">登録済</span>
<span class="t" style="left:277.3px;top:652.10px;font-size:9.8px;font-weight:700;color:#1565c0;line-height:14px;">いのうえ しろう</span>
<span class="t" style="left:277.1px;top:668.30px;font-size:12.5px;font-weight:700;color:#1565c0;line-height:18px;">井上 四郎</span>
<span class="t" style="left:466px;top:658.00px;font-size:13px;font-weight:400;color:#1565c0;line-height:18px;">男</span>
<span class="t" style="left:518px;top:658.00px;font-size:13px;font-weight:400;color:#222;line-height:18px;">2年</span>
<span class="t" style="left:580.6px;top:658.00px;font-size:13px;font-weight:400;color:#222;line-height:18px;">2B(2)</span>
<span class="t" style="left:753.7px;top:658.00px;font-size:13px;font-weight:400;color:#222;line-height:18px;">登録済</span>
<span class="t" style="left:277.3px;top:695.00px;font-size:9.8px;font-weight:700;color:#1565c0;line-height:14px;">いのうえ ごろう</span>
<span class="t" style="left:277.1px;top:711.20px;font-size:12.5px;font-weight:700;color:#1565c0;line-height:18px;">井上 五郎</span>
<span class="t" style="left:466px;top:700.90px;font-size:13px;font-weight:400;color:#1565c0;line-height:18px;">男</span>
<span class="t" style="left:518px;top:700.90px;font-size:13px;font-weight:400;color:#222;line-height:18px;">3年</span>
<span class="t" style="left:580.6px;top:700.90px;font-size:13px;font-weight:400;color:#222;line-height:18px;">3A(2)</span>
<span class="t" style="left:753.7px;top:700.90px;font-size:13px;font-weight:400;color:#222;line-height:18px;">登録済</span>
<svg class="a" style="left:1335px;top:173.300px" width="9" height="7" viewBox="0 0 9 7"><path d="M0.300 6.300 L4.500 0.500 L8.700 6.300 Z" fill="#9a9a9a"/></svg>
<div class="a" style="left:1335.8px;top:186px;width:8px;height:331px;background:#909090;border-radius:4px;"></div>
</section></main>
<div class="a" style="left:0;top:0;width:1364px;height:697px;background:rgba(0,0,0,.5);"></div>
<div class="a" style="left:1303px;top:6.1px;width:56.2px;height:13.8px;background:#1b6c25;"></div>
<div class="a" role="dialog" style="left:0;top:0;width:1364px;height:697px;will-change:transform;">
<div class="a" style="left:210px;top:128px;width:946px;height:502px;background:#fff;border-radius:9px;overflow:hidden;"><div class="a" style="left:929px;top:0;width:17px;height:502px;background:#fafafa;"></div><svg class="a" style="left:932px;top:7px" width="9" height="7" viewBox="0 0 9 7"><path d="M0 6.500 L4.500 0.300 L9 6.500 Z" fill="#8b8b8b"/></svg><svg class="a" style="left:932px;top:489px" width="9" height="7" viewBox="0 0 9 7"><path d="M0 0.500 L4.500 6.700 L9 0.500 Z" fill="#8b8b8b"/></svg></div>
<div class="a dot" style="left:225px;top:170.9px;width:434px;"></div>
<div class="a dot" style="left:225px;top:202.9px;width:434px;"></div>
<div class="a dot" style="left:225px;top:234.9px;width:434px;"></div>
<div class="a dot" style="left:225px;top:268.2px;width:434px;"></div>
<div class="a dot" style="left:225px;top:300.1px;width:434px;"></div>
<div class="a dot" style="left:225px;top:352.8px;width:434px;"></div>
<div class="a dot" style="left:225px;top:386.0px;width:434px;"></div>
<div class="a dot" style="left:225px;top:485.6px;width:434px;"></div>
<span class="t" style="left:230.2px;top:148.00px;font-size:12.5px;font-weight:700;color:#111;line-height:18px;">氏名</span>
<span class="t" style="left:230.2px;top:180.00px;font-size:12.5px;font-weight:700;color:#111;line-height:18px;">ふりがな</span>
<span class="t" style="left:230.2px;top:212.00px;font-size:12.5px;font-weight:700;color:#111;line-height:18px;">児童との続柄</span>
<span class="t" style="left:230.2px;top:244.60px;font-size:12.5px;font-weight:700;color:#111;line-height:18px;">携帯電話番号</span>
<span class="t" style="left:230.2px;top:276.80px;font-size:12.5px;font-weight:700;color:#111;line-height:18px;">その他の電話番号</span>
<span class="t" style="left:230.2px;top:310.20px;font-size:12.5px;font-weight:700;color:#111;line-height:18px;">メールアドレス</span>
<span class="t" style="left:231.2px;top:329.00px;font-size:12.5px;font-weight:700;color:#111;line-height:18px;">（ユーザーID）</span>
<span class="t" style="left:230.2px;top:362.60px;font-size:12.5px;font-weight:700;color:#111;line-height:18px;">登録状態</span>
<span class="t" style="left:230.2px;top:414.70px;font-size:12.5px;font-weight:700;color:#111;line-height:18px;">児童の一覧</span>
<span class="t" style="left:230.2px;top:518.00px;font-size:12.5px;font-weight:700;color:#111;line-height:18px;">利用料の減免</span>
<span class="t" style="left:339px;top:147.75px;font-size:12.6px;font-weight:400;color:#222;line-height:18px;">（姓）</span>
<div class="a inp" style="left:377px;top:145px;width:101px;height:21px;"><span class="st" style="left:2.9px;line-height:19px;">上田</span></div>
<span class="t" style="left:481.2px;top:147.75px;font-size:12.6px;font-weight:400;color:#222;line-height:18px;">（名）</span>
<div class="a inp" style="left:519px;top:145px;width:101px;height:21px;"><span class="st" style="left:2.9px;line-height:19px;">悠一</span></div>
<span class="t" style="left:339px;top:179.85px;font-size:12.6px;font-weight:400;color:#222;line-height:18px;">（姓）</span>
<div class="a inp" style="left:377px;top:177px;width:101px;height:21px;"><span class="st" style="left:2.9px;line-height:19px;">うえだ</span></div>
<span class="t" style="left:481.2px;top:179.85px;font-size:12.6px;font-weight:400;color:#222;line-height:18px;">（名）</span>
<div class="a inp" style="left:519px;top:177px;width:101px;height:21px;"><span class="st" style="left:2.9px;line-height:19px;">ゆういち</span></div>
<div class="a inp" style="left:340px;top:209px;width:138px;height:21px;"><span class="st" style="left:2.9px;line-height:19px;">父</span></div>
<div class="a inp" style="left:340px;top:242px;width:50px;height:21px;"><span class="st" style="left:2.6px;line-height:19px;">222</span></div>
<span class="t" style="left:393.2px;top:245.10px;font-size:12.6px;font-weight:400;color:#222;line-height:18px;">-</span>
<div class="a inp" style="left:400px;top:242px;width:50px;height:21px;"><span class="st" style="left:2.6px;line-height:19px;">2222</span></div>
<span class="t" style="left:453.6px;top:245.10px;font-size:12.6px;font-weight:400;color:#222;line-height:18px;">-</span>
<div class="a inp" style="left:461px;top:242px;width:50px;height:21px;"><span class="st" style="left:2.6px;line-height:19px;">2222</span></div>
<div class="a inp" style="left:340px;top:274px;width:50px;height:21px;"><span class="st" style="left:2.6px;line-height:19px;">333</span></div>
<span class="t" style="left:393.2px;top:277.10px;font-size:12.6px;font-weight:400;color:#222;line-height:18px;">-</span>
<div class="a inp" style="left:400px;top:274px;width:50px;height:21px;"><span class="st" style="left:2.6px;line-height:19px;">3333</span></div>
<span class="t" style="left:453.6px;top:277.10px;font-size:12.6px;font-weight:400;color:#222;line-height:18px;">-</span>
<div class="a inp" style="left:461px;top:274px;width:50px;height:21px;"><span class="st" style="left:2.6px;line-height:19px;">3333</span></div>
<div class="a sel" style="left:514px;top:274px;width:63px;height:21px;"><span class="st" style="left:5px;line-height:19px;">自宅</span><span class="cv"><svg class="chev" viewBox="0 0 10 7" width="9" height="6.3"><path d="M1.2 1.2 L5 5.2 L8.800 1.200" fill="none" stroke="#111" stroke-width="2.4" stroke-linecap="round" stroke-linejoin="round"/></svg></span></div>
<div class="a inp" style="left:340px;top:317px;width:315px;height:21px;"><span class="st" style="left:2.6px;line-height:19px;">test99999@t-59.com</span></div>
<div class="a sel" style="left:340px;top:360px;width:63px;height:21px;"><span class="st" style="left:5px;line-height:19px;">登録済</span><span class="cv"><svg class="chev" viewBox="0 0 10 7" width="9" height="6.3"><path d="M1.2 1.2 L5 5.2 L8.800 1.200" fill="none" stroke="#111" stroke-width="2.4" stroke-linecap="round" stroke-linejoin="round"/></svg></span></div>
<div class="a btn" style="left:230px;top:436px;width:90.2px;height:25px;background:#43a047;font-size:11px;letter-spacing:0;padding-bottom:3.4px;padding-right:1.2px;"><svg class="ic" viewBox="0 0 640 512" width="15.00" height="12" style="fill:currentColor;margin-right:4.5px;"><path d="M624 208h-64v-64c0-8.800-7.200-16-16-16h-32c-8.800 0-16 7.200-16 16v64h-64c-8.800 0-16 7.200-16 16v32c0 8.800 7.200 16 16 16h64v64c0 8.800 7.200 16 16 16h32c8.800 0 16-7.200 16-16v-64h64c8.800 0 16-7.200 16-16v-32c0-8.800-7.200-16-16-16zm-400 48c70.700 0 128-57.300 128-128S294.700 0 224 0 96 57.300 96 128s57.300 128 128 128zm89.600 32h-16.700c-22.200 10.200-46.900 16-72.900 16s-50.600-5.800-72.900-16h-16.700C60.200 288 0 348.200 0 422.400V464c0 26.500 21.500 48 48 48h352c26.500 0 48-21.500 48-48v-41.600c0-74.200-60.200-134.400-134.400-134.400z"/></svg><span>児童を追加</span></div>
<div class="a" style="left:341.700px;top:433.800px;width:6px;height:6px;border:1.2px solid #333;border-radius:50%;box-sizing:border-box;"></div>
<span class="t" style="left:358.5px;top:428.80px;font-size:12.5px;font-weight:400;color:#222;line-height:18px;">児童が未登録です</span>
<div class="a dot" style="left:752px;top:166.7px;width:374px;"></div>
<div class="a dot" style="left:752px;top:195.7px;width:374px;"></div>
<div class="a dot" style="left:673px;top:224.8px;width:453px;"></div>
<span class="t" style="left:677.2px;top:174.52px;font-size:12.5px;font-weight:700;color:#111;line-height:18px;">代理引取人1</span>
<span class="t" style="left:757.2px;top:146.40px;font-size:12.5px;font-weight:700;color:#111;line-height:18px;">氏名</span>
<span class="t" style="left:757.2px;top:174.72px;font-size:12.5px;font-weight:700;color:#111;line-height:18px;">ふりがな</span>
<span class="t" style="left:757.2px;top:204.34px;font-size:12.5px;font-weight:700;color:#111;line-height:18px;">児童との続柄</span>
<span class="t" style="left:841.6px;top:145.90px;font-size:12.6px;font-weight:400;color:#222;line-height:18px;">（姓）</span>
<div class="a inp" style="left:879px;top:143px;width:101px;height:21px;"><span class="st" style="left:2.9px;line-height:19px;">上田</span></div>
<span class="t" style="left:982.5px;top:145.90px;font-size:12.6px;font-weight:400;color:#222;line-height:18px;">（名）</span>
<div class="a inp" style="left:1020px;top:143px;width:101px;height:21px;"><span class="st" style="left:2.9px;line-height:19px;">勇次郎</span></div>
<span class="t" style="left:841.6px;top:174.92px;font-size:12.6px;font-weight:400;color:#222;line-height:18px;">（姓）</span>
<div class="a inp" style="left:879px;top:172px;width:101px;height:21px;"><span class="st" style="left:2.9px;line-height:19px;">うえだ</span></div>
<span class="t" style="left:982.5px;top:174.92px;font-size:12.6px;font-weight:400;color:#222;line-height:18px;">（名）</span>
<div class="a inp" style="left:1020px;top:172px;width:101px;height:21px;"><span class="st" style="left:2.9px;line-height:19px;">ゆうじろう</span></div>
<div class="a inp" style="left:841px;top:201px;width:139px;height:21px;"><span class="st" style="left:2.9px;line-height:19px;">祖父</span></div>
<div class="a dot" style="left:752px;top:253.8px;width:374px;"></div>
<div class="a dot" style="left:752px;top:282.8px;width:374px;"></div>
<div class="a dot" style="left:673px;top:311.8px;width:453px;"></div>
<span class="t" style="left:677.2px;top:261.58px;font-size:12.5px;font-weight:700;color:#111;line-height:18px;">代理引取人2</span>
<span class="t" style="left:757.2px;top:233.46px;font-size:12.5px;font-weight:700;color:#111;line-height:18px;">氏名</span>
<span class="t" style="left:757.2px;top:261.78px;font-size:12.5px;font-weight:700;color:#111;line-height:18px;">ふりがな</span>
<span class="t" style="left:757.2px;top:291.40px;font-size:12.5px;font-weight:700;color:#111;line-height:18px;">児童との続柄</span>
<span class="t" style="left:841.6px;top:232.96px;font-size:12.6px;font-weight:400;color:#222;line-height:18px;">（姓）</span>
<div class="a inp" style="left:879px;top:230px;width:101px;height:21px;"><span class="st" style="left:2.9px;line-height:19px;"></span></div>
<span class="t" style="left:982.5px;top:232.96px;font-size:12.6px;font-weight:400;color:#222;line-height:18px;">（名）</span>
<div class="a inp" style="left:1020px;top:230px;width:101px;height:21px;"><span class="st" style="left:2.9px;line-height:19px;"></span></div>
<span class="t" style="left:841.6px;top:261.98px;font-size:12.6px;font-weight:400;color:#222;line-height:18px;">（姓）</span>
<div class="a inp" style="left:879px;top:259px;width:101px;height:21px;"><span class="st" style="left:2.9px;line-height:19px;"></span></div>
<span class="t" style="left:982.5px;top:261.98px;font-size:12.6px;font-weight:400;color:#222;line-height:18px;">（名）</span>
<div class="a inp" style="left:1020px;top:259px;width:101px;height:21px;"><span class="st" style="left:2.9px;line-height:19px;"></span></div>
<div class="a inp" style="left:841px;top:288px;width:139px;height:21px;"><span class="st" style="left:2.9px;line-height:19px;"></span></div>
<div class="a dot" style="left:752px;top:340.8px;width:374px;"></div>
<div class="a dot" style="left:752px;top:369.9px;width:374px;"></div>
<div class="a dot" style="left:673px;top:398.9px;width:453px;"></div>
<span class="t" style="left:677.2px;top:348.64px;font-size:12.5px;font-weight:700;color:#111;line-height:18px;">代理引取人3</span>
<span class="t" style="left:757.2px;top:320.52px;font-size:12.5px;font-weight:700;color:#111;line-height:18px;">氏名</span>
<span class="t" style="left:757.2px;top:348.84px;font-size:12.5px;font-weight:700;color:#111;line-height:18px;">ふりがな</span>
<span class="t" style="left:757.2px;top:378.46px;font-size:12.5px;font-weight:700;color:#111;line-height:18px;">児童との続柄</span>
<span class="t" style="left:841.6px;top:320.02px;font-size:12.6px;font-weight:400;color:#222;line-height:18px;">（姓）</span>
<div class="a inp" style="left:879px;top:317px;width:101px;height:21px;"><span class="st" style="left:2.9px;line-height:19px;"></span></div>
<span class="t" style="left:982.5px;top:320.02px;font-size:12.6px;font-weight:400;color:#222;line-height:18px;">（名）</span>
<div class="a inp" style="left:1020px;top:317px;width:101px;height:21px;"><span class="st" style="left:2.9px;line-height:19px;"></span></div>
<span class="t" style="left:841.6px;top:349.04px;font-size:12.6px;font-weight:400;color:#222;line-height:18px;">（姓）</span>
<div class="a inp" style="left:879px;top:346px;width:101px;height:21px;"><span class="st" style="left:2.9px;line-height:19px;"></span></div>
<span class="t" style="left:982.5px;top:349.04px;font-size:12.6px;font-weight:400;color:#222;line-height:18px;">（名）</span>
<div class="a inp" style="left:1020px;top:346px;width:101px;height:21px;"><span class="st" style="left:2.9px;line-height:19px;"></span></div>
<div class="a inp" style="left:841px;top:376px;width:139px;height:21px;"><span class="st" style="left:2.9px;line-height:19px;"></span></div>
<div class="a dot" style="left:752px;top:427.9px;width:374px;"></div>
<div class="a dot" style="left:752px;top:456.9px;width:374px;"></div>
<div class="a dot" style="left:673px;top:485.9px;width:453px;"></div>
<span class="t" style="left:677.2px;top:435.70px;font-size:12.5px;font-weight:700;color:#111;line-height:18px;">代理引取人4</span>
<span class="t" style="left:757.2px;top:407.58px;font-size:12.5px;font-weight:700;color:#111;line-height:18px;">氏名</span>
<span class="t" style="left:757.2px;top:435.90px;font-size:12.5px;font-weight:700;color:#111;line-height:18px;">ふりがな</span>
<span class="t" style="left:757.2px;top:465.52px;font-size:12.5px;font-weight:700;color:#111;line-height:18px;">児童との続柄</span>
<span class="t" style="left:841.6px;top:407.08px;font-size:12.6px;font-weight:400;color:#222;line-height:18px;">（姓）</span>
<div class="a inp" style="left:879px;top:404px;width:101px;height:21px;"><span class="st" style="left:2.9px;line-height:19px;"></span></div>
<span class="t" style="left:982.5px;top:407.08px;font-size:12.6px;font-weight:400;color:#222;line-height:18px;">（名）</span>
<div class="a inp" style="left:1020px;top:404px;width:101px;height:21px;"><span class="st" style="left:2.9px;line-height:19px;"></span></div>
<span class="t" style="left:841.6px;top:436.10px;font-size:12.6px;font-weight:400;color:#222;line-height:18px;">（姓）</span>
<div class="a inp" style="left:879px;top:433px;width:101px;height:21px;"><span class="st" style="left:2.9px;line-height:19px;"></span></div>
<span class="t" style="left:982.5px;top:436.10px;font-size:12.6px;font-weight:400;color:#222;line-height:18px;">（名）</span>
<div class="a inp" style="left:1020px;top:433px;width:101px;height:21px;"><span class="st" style="left:2.9px;line-height:19px;"></span></div>
<div class="a inp" style="left:841px;top:463px;width:139px;height:21px;"><span class="st" style="left:2.9px;line-height:19px;"></span></div>
<span class="t" style="left:215.60000000000002px;width:300px;text-align:center;top:495.30px;font-size:13px;font-weight:700;color:#111;line-height:18px;">4月</span>
<div class="a sel" style="left:340px;top:515px;width:51px;height:21px;"><span class="st" style="left:5.6px;line-height:19px;">なし</span><span class="cv"><svg class="chev" viewBox="0 0 10 7" width="9" height="6.3"><path d="M1.2 1.2 L5 5.2 L8.800 1.200" fill="none" stroke="#111" stroke-width="2.4" stroke-linecap="round" stroke-linejoin="round"/></svg></span></div>
<span class="t" style="left:275.95000000000005px;width:300px;text-align:center;top:495.30px;font-size:13px;font-weight:700;color:#111;line-height:18px;">5月</span>
<div class="a sel" style="left:400px;top:515px;width:51px;height:21px;"><span class="st" style="left:5.6px;line-height:19px;">なし</span><span class="cv"><svg class="chev" viewBox="0 0 10 7" width="9" height="6.3"><path d="M1.2 1.2 L5 5.2 L8.800 1.200" fill="none" stroke="#111" stroke-width="2.4" stroke-linecap="round" stroke-linejoin="round"/></svg></span></div>
<span class="t" style="left:336.3px;width:300px;text-align:center;top:495.30px;font-size:13px;font-weight:700;color:#111;line-height:18px;">6月</span>
<div class="a sel" style="left:461px;top:515px;width:51px;height:21px;"><span class="st" style="left:5.6px;line-height:19px;">なし</span><span class="cv"><svg class="chev" viewBox="0 0 10 7" width="9" height="6.3"><path d="M1.2 1.2 L5 5.2 L8.800 1.200" fill="none" stroke="#111" stroke-width="2.4" stroke-linecap="round" stroke-linejoin="round"/></svg></span></div>
<span class="t" style="left:396.6500000000001px;width:300px;text-align:center;top:495.30px;font-size:13px;font-weight:700;color:#111;line-height:18px;">7月</span>
<div class="a sel" style="left:521px;top:515px;width:51px;height:21px;"><span class="st" style="left:5.6px;line-height:19px;">なし</span><span class="cv"><svg class="chev" viewBox="0 0 10 7" width="9" height="6.3"><path d="M1.2 1.2 L5 5.2 L8.800 1.200" fill="none" stroke="#111" stroke-width="2.4" stroke-linecap="round" stroke-linejoin="round"/></svg></span></div>
<span class="t" style="left:457.0px;width:300px;text-align:center;top:495.30px;font-size:13px;font-weight:700;color:#111;line-height:18px;">8月</span>
<div class="a sel" style="left:581px;top:515px;width:51px;height:21px;"><span class="st" style="left:5.6px;line-height:19px;">なし</span><span class="cv"><svg class="chev" viewBox="0 0 10 7" width="9" height="6.3"><path d="M1.2 1.2 L5 5.2 L8.800 1.200" fill="none" stroke="#111" stroke-width="2.4" stroke-linecap="round" stroke-linejoin="round"/></svg></span></div>
<span class="t" style="left:517.35px;width:300px;text-align:center;top:495.30px;font-size:13px;font-weight:700;color:#111;line-height:18px;">9月</span>
<div class="a sel" style="left:642px;top:515px;width:51px;height:21px;"><span class="st" style="left:5.6px;line-height:19px;">なし</span><span class="cv"><svg class="chev" viewBox="0 0 10 7" width="9" height="6.3"><path d="M1.2 1.2 L5 5.2 L8.800 1.200" fill="none" stroke="#111" stroke-width="2.4" stroke-linecap="round" stroke-linejoin="round"/></svg></span></div>
<span class="t" style="left:577.7px;width:300px;text-align:center;top:495.30px;font-size:13px;font-weight:700;color:#111;line-height:18px;">10月</span>
<div class="a sel" style="left:702px;top:515px;width:51px;height:21px;"><span class="st" style="left:5.6px;line-height:19px;">なし</span><span class="cv"><svg class="chev" viewBox="0 0 10 7" width="9" height="6.3"><path d="M1.2 1.2 L5 5.2 L8.800 1.200" fill="none" stroke="#111" stroke-width="2.4" stroke-linecap="round" stroke-linejoin="round"/></svg></span></div>
<span class="t" style="left:638.05px;width:300px;text-align:center;top:495.30px;font-size:13px;font-weight:700;color:#111;line-height:18px;">11月</span>
<div class="a sel" style="left:762px;top:515px;width:51px;height:21px;"><span class="st" style="left:5.6px;line-height:19px;">なし</span><span class="cv"><svg class="chev" viewBox="0 0 10 7" width="9" height="6.3"><path d="M1.2 1.2 L5 5.2 L8.800 1.200" fill="none" stroke="#111" stroke-width="2.4" stroke-linecap="round" stroke-linejoin="round"/></svg></span></div>
<span class="t" style="left:698.4000000000001px;width:300px;text-align:center;top:495.30px;font-size:13px;font-weight:700;color:#111;line-height:18px;">12月</span>
<div class="a sel" style="left:823px;top:515px;width:51px;height:21px;"><span class="st" style="left:5.6px;line-height:19px;">なし</span><span class="cv"><svg class="chev" viewBox="0 0 10 7" width="9" height="6.3"><path d="M1.2 1.2 L5 5.2 L8.800 1.200" fill="none" stroke="#111" stroke-width="2.4" stroke-linecap="round" stroke-linejoin="round"/></svg></span></div>
<span class="t" style="left:758.75px;width:300px;text-align:center;top:495.30px;font-size:13px;font-weight:700;color:#111;line-height:18px;">1月</span>
<div class="a sel" style="left:883px;top:515px;width:51px;height:21px;"><span class="st" style="left:5.6px;line-height:19px;">なし</span><span class="cv"><svg class="chev" viewBox="0 0 10 7" width="9" height="6.3"><path d="M1.2 1.2 L5 5.2 L8.800 1.200" fill="none" stroke="#111" stroke-width="2.4" stroke-linecap="round" stroke-linejoin="round"/></svg></span></div>
<span class="t" style="left:819.1px;width:300px;text-align:center;top:495.30px;font-size:13px;font-weight:700;color:#111;line-height:18px;">2月</span>
<div class="a sel" style="left:943px;top:515px;width:52px;height:21px;"><span class="st" style="left:5.6px;line-height:19px;">なし</span><span class="cv"><svg class="chev" viewBox="0 0 10 7" width="9" height="6.3"><path d="M1.2 1.2 L5 5.2 L8.800 1.200" fill="none" stroke="#111" stroke-width="2.4" stroke-linecap="round" stroke-linejoin="round"/></svg></span></div>
<span class="t" style="left:879.45px;width:300px;text-align:center;top:495.30px;font-size:13px;font-weight:700;color:#111;line-height:18px;">3月</span>
<div class="a sel" style="left:1004px;top:515px;width:51px;height:21px;"><span class="st" style="left:5.6px;line-height:19px;">なし</span><span class="cv"><svg class="chev" viewBox="0 0 10 7" width="9" height="6.3"><path d="M1.2 1.2 L5 5.2 L8.800 1.200" fill="none" stroke="#111" stroke-width="2.4" stroke-linecap="round" stroke-linejoin="round"/></svg></span></div>
<div class="a" style="left:225px;top:546px;width:901px;height:23px;background:#dcedc8;border-radius:4px;"></div>
<div class="a" style="left:230.100px;top:552px;line-height:0;"><svg class="ic" viewBox="0 0 512 512" width="12.80" height="12.8" style="fill:#2e7d32;"><path d="M504 256c0 136.967-111.033 248-248 248S8 392.967 8 256 119.033 8 256 8s248 111.033 248 248zM227.314 387.314l184-184c6.248-6.248 6.248-16.379 0-22.627l-22.627-22.627c-6.248-6.249-16.379-6.249-22.628 0L216 308.118l-70.059-70.059c-6.248-6.248-16.379-6.248-22.628 0l-22.627 22.627c-6.248 6.248-6.248 16.379 0 22.627l104 104c6.249 6.249 16.379 6.249 22.628.001z"/></svg></div>
<span class="t" style="left:246.6px;top:550.30px;font-size:12.5px;font-weight:700;color:#2e7d32;line-height:18px;">上田 悠一さんを更新しました。</span>
<div class="a btn big" style="left:463.2px;top:578.200px;width:104.5px;height:40.600px;background:#607d8b;"><svg class="ic" viewBox="0 0 352 512" width="9.62" height="14" style="fill:currentColor;margin-right:7px;"><path d="M242.72 256l100.07-100.07c12.28-12.28 12.28-32.19 0-44.48l-22.24-22.24c-12.28-12.28-32.19-12.28-44.48 0L176 189.28 75.93 89.21c-12.28-12.28-32.19-12.28-44.48 0L9.21 111.45c-12.28 12.28-12.28 32.19 0 44.48L109.28 256 9.21 356.07c-12.28 12.28-12.28 32.19 0 44.48l22.24 22.24c12.28 12.28 32.2 12.28 44.48 0L176 322.72l100.07 100.07c12.28 12.28 32.2 12.28 44.48 0l22.24-22.24c12.28-12.28 12.28-32.19 0-44.48L242.72 256z"/></svg><span>閉じる</span></div>
<div class="a btn big" style="left:577.2px;top:578.200px;width:125.5px;height:40.600px;background:#02529f;"><svg class="ic" viewBox="0 0 576 512" width="16.88" height="15" style="fill:currentColor;margin-right:7px;"><path d="M402.600 83.200l90.200 90.200c3.800 3.800 3.800 10 0 13.800L274.400 405.600l-92.800 10.300c-12.400 1.400-22.900-9.100-21.500-21.500l10.300-92.800L388.800 83.200c3.800-3.800 10-3.800 13.800 0zm162-22.900l-48.800-48.800c-15.200-15.200-39.900-15.200-55.200 0l-35.400 35.400c-3.800 3.800-3.800 10 0 13.800l90.200 90.200c3.800 3.800 10 3.800 13.800 0l35.400-35.400c15.200-15.300 15.200-40 0-55.200zM384 346.200V448H64V128h229.800c3.200 0 6.200-1.300 8.500-3.500l40-40c7.600-7.600 2.200-20.500-8.500-20.500H48C21.500 64 0 85.500 0 112v352c0 26.500 21.500 48 48 48h352c26.500 0 48-21.500 48-48V306.200c0-10.700-12.900-16-20.500-8.500l-40 40c-2.200 2.300-3.500 5.300-3.500 8.500z"/></svg><span>編集する</span></div>
<div class="a btn big" style="left:712.2px;top:578.200px;width:175.6px;height:40.600px;background:#ef6c00;"><svg class="ic" viewBox="0 0 320 512" width="9.38" height="15" style="fill:currentColor;margin-right:7px;"><path d="M272 0H48C21.500 0 0 21.500 0 48v416c0 26.500 21.500 48 48 48h224c26.500 0 48-21.500 48-48V48c0-26.500-21.500-48-48-48zM160 480c-17.700 0-32-14.300-32-32s14.300-32 32-32 32 14.300 32 32-14.300 32-32 32zm112-108c0 6.600-5.400 12-12 12H60c-6.600 0-12-5.400-12-12V60c0-6.600 5.400-12 12-12h200c6.600 0 12 5.400 12 12v312z"/></svg><span>保護者画面を見る</span></div>
</div>
</div></body></html>
